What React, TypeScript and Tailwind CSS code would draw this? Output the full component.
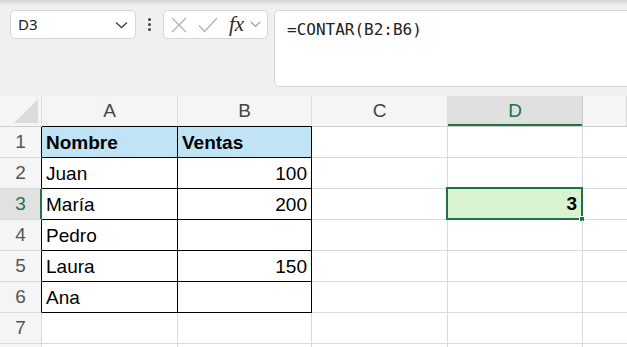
import React from 'react';

const gridLine = 'border-[#dadada]';

type Cell = { text?: string; bold?: boolean; right?: boolean };

const rows: Cell[][] = [
  [{ text: 'Nombre', bold: true }, { text: 'Ventas', bold: true }],
  [{ text: 'Juan' }, { text: '100', right: true }],
  [{ text: 'María' }, { text: '200', right: true }],
  [{ text: 'Pedro' }, {}],
  [{ text: 'Laura' }, { text: '150', right: true }],
  [{ text: 'Ana' }, {}],
  [],
  [],
];

const cellFont = { fontFamily: '"Liberation Sans", Arial, sans-serif' };

function NameBox() {
  return (
    <div className="flex h-[29px] w-[126px] shrink-0 items-center justify-between rounded-[5px] border border-[#d6d6d6] bg-white pl-[7px] pr-[7px]">
      <span className="text-[15px] text-[#222]" style={{ fontFamily: '"Noto Sans", sans-serif' }}>D3</span>
      <svg width="13" height="8" viewBox="0 0 13 8" fill="none" stroke="#444" strokeWidth="1.4">
        <path d="M1 1.5 L6.5 6.5 L12 1.5" />
      </svg>
    </div>
  );
}

function FxBox() {
  return (
    <div className="flex h-[29px] w-[105px] shrink-0 items-center rounded-[5px] border border-[#d6d6d6] bg-white pl-[7px]">
      <svg className="shrink-0" width="16" height="16" viewBox="0 0 16 16" fill="none" stroke="#b4b4b4" strokeWidth="1.3">
        <path d="M1 1 L15 15 M15 1 L1 15" />
      </svg>
      <svg className="ml-[11px] shrink-0" width="20" height="16" viewBox="0 0 20 16" fill="none" stroke="#b4b4b4" strokeWidth="1.3">
        <path d="M1 8.5 L6.5 14.5 L19 1" />
      </svg>
      <span
        className="ml-[11px] text-[21px] italic leading-none text-[#2b2b2b]"
        style={{ fontFamily: '"Liberation Serif", "Times New Roman", serif' }}
      >
        fx
      </span>
      <svg className="ml-[6px] shrink-0" width="11" height="7" viewBox="0 0 11 7" fill="none" stroke="#9a9a9a" strokeWidth="1.2">
        <path d="M1 1 L5.5 5.5 L10 1" />
      </svg>
    </div>
  );
}

function ColHeader({ label, width, selected }: { label: string; width?: number; selected?: boolean }) {
  return (
    <div
      className={
        'flex h-full items-center justify-center border-r text-[19px] ' +
        (selected
          ? 'border-[#c9c9c9] bg-[#e0e0e0] text-[#217346] shadow-[inset_0_-2px_0_#217346]'
          : 'border-[#dcdcdc] text-[#444]')
      }
      style={{ ...cellFont, width: width ?? undefined, flex: width ? 'none' : '1' }}
    >
      {label}
    </div>
  );
}

export default function App() {
  return (
    <div className="h-[347px] w-[627px] overflow-hidden bg-[#f0f0f0]">
      <div className="h-[5px] bg-gradient-to-b from-[#d4d4d4] to-[#ededed]" />
      <div className="flex items-start pl-[10px] pt-[5px]">
        <NameBox />
        <div className="flex h-[29px] w-[27px] shrink-0 flex-col items-center justify-center gap-[2px]">
          <div className="h-[3px] w-[3px] rounded-full bg-[#444]" />
          <div className="h-[3px] w-[3px] rounded-full bg-[#444]" />
          <div className="h-[3px] w-[3px] rounded-full bg-[#444]" />
        </div>
        <FxBox />
        <div className="ml-[6px] h-[77px] w-[420px] shrink-0 rounded-[5px] border border-[#d6d6d6] bg-white pl-[12px] pt-[6px]">
          <span className="text-[16px] text-[#222]" style={{ fontFamily: '"DejaVu Sans Mono", "Liberation Mono", monospace' }}>
            =CONTAR(B2:B6)
          </span>
        </div>
      </div>

      <div className="mt-[9px] flex h-[31px] border-b border-[#cfcfcf] bg-[#f5f5f5]">
        <div className="relative w-[42px] shrink-0 border-r border-[#dcdcdc]">
          <svg className="absolute bottom-[3px] right-[3px]" width="24" height="24" viewBox="0 0 24 24">
            <path d="M24 0 L24 24 L0 24 Z" fill="#dcdcdc" />
          </svg>
        </div>
        <ColHeader label="A" width={136} />
        <ColHeader label="B" width={134} />
        <ColHeader label="C" width={136} />
        <ColHeader label="D" width={135} selected />
        <ColHeader label="" />
      </div>

      <div className="bg-white">
        {rows.map((row, i) => {
          const n = i + 1;
          const inTable = n <= 6;
          const sel = n === 3;
          return (
            <div key={n} className="flex h-[31px]">
              <div
                className={
                  'flex w-[42px] shrink-0 items-center justify-center border-b border-r text-[19px] ' +
                  (sel
                    ? 'border-b-[#dadada] border-r-[#217346] bg-[#e1e1e1] text-[#217346] shadow-[inset_-1px_0_0_#217346]'
                    : 'border-b-[#dadada] bg-[#f5f5f5] text-[#555] ' + (inTable ? 'border-r-black' : 'border-r-[#dadada]'))
                }
                style={cellFont}
              >
                {n <= 7 ? n : ''}
              </div>
              {[136, 134].map((w, c) => {
                const cell = row[c] ?? {};
                const tableCell = inTable;
                return (
                  <div
                    key={c}
                    className={
                      'flex shrink-0 items-center border-b border-r px-[4px] pt-[2px] text-[19px] text-black ' +
                      (tableCell ? 'border-black ' : gridLine + ' ') +
                      (n === 1 ? 'bg-[#c0e4f5] ' : '') +
                      (n === 1 ? 'border-t border-t-black ' : '') +
                      (cell.right ? 'justify-end ' : '') +
                      (cell.bold ? 'font-bold' : '')
                    }
                    style={{ ...cellFont, width: w, marginTop: n === 1 ? -1 : 0, height: n === 1 ? 32 : undefined }}
                  >
                    {cell.text}
                  </div>
                );
              })}
              <div className={'w-[136px] shrink-0 border-b border-r ' + gridLine} />
              <div className={'relative w-[135px] shrink-0 border-b border-r ' + gridLine}>
                {sel && (
                  <div
                    className="absolute left-[-2px] top-[-2px] flex h-[33px] w-[137px] items-center justify-end border-2 border-[#217346] bg-[#d9f2d0] pr-[4px] pt-[2px] text-[19px] font-bold text-black"
                    style={cellFont}
                  >
                    3
                    <div className="absolute bottom-[-4px] right-[-4px] h-[6px] w-[6px] border border-white bg-[#217346]" />
                  </div>
                )}
              </div>
              <div className={'flex-1 border-b ' + gridLine} />
            </div>
          );
        })}
      </div>
    </div>
  );
}
